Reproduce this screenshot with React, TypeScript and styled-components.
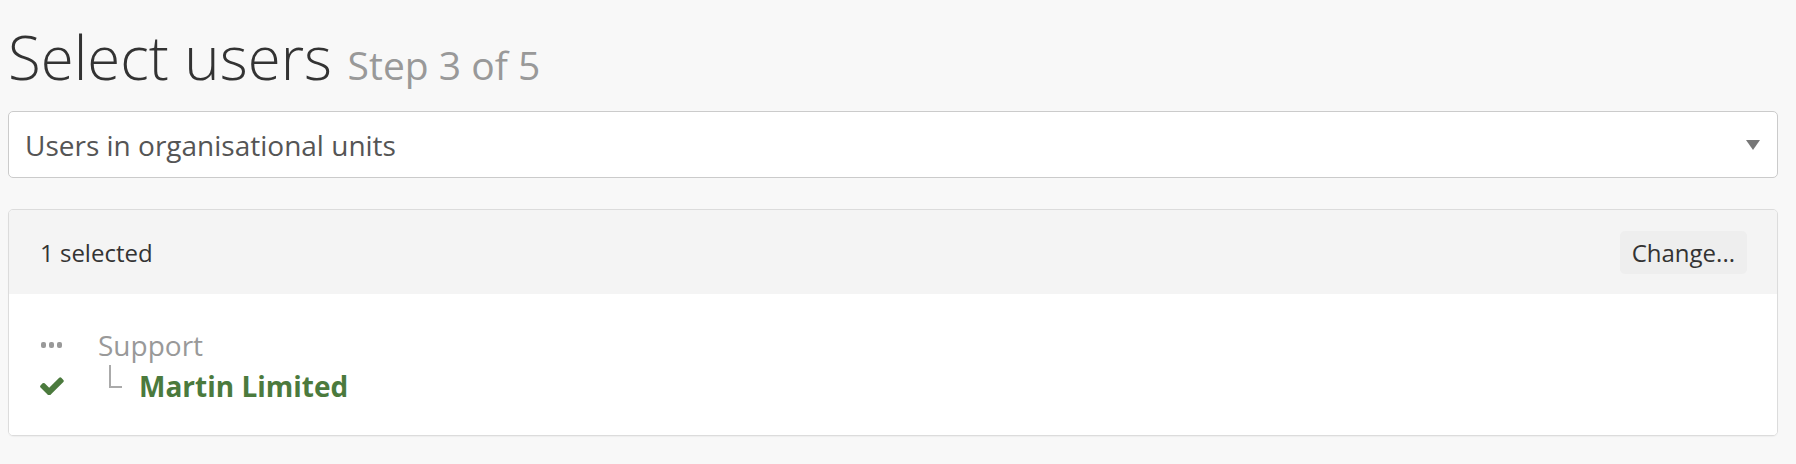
import React from 'react';
import styled, {createGlobalStyle} from "styled-components";

const GlobalStyle = createGlobalStyle`
  body {
    margin: 0;
    background: #f8f8f8;
    font-family: "Open Sans", "Liberation Sans", sans-serif;
    color: #333;
  }
`;

const Page = styled.div`
  padding: 0 18px 30px 8px;
`;

const Title = styled.h1`
  margin: 24px 0 0;
  font-size: 60px;
  font-weight: 300;
  line-height: 66px;
  color: #333;
`;

const Step = styled.small`
  font-size: 39px;
  font-weight: 400;
  color: #999;
`;

const SelectBox = styled.div`
  margin-top: 13px;
  height: 67px;
  box-sizing: border-box;
  display: flex;
  align-items: center;
  justify-content: space-between;
  padding: 0 17px 0 16px;
  background: #fff;
  border: 1px solid #cbcbcb;
  border-radius: 5px;
  font-size: 28px;
  color: #555;
`;

const Caret = styled.span`
  width: 0;
  height: 0;
  border-left: 7px solid transparent;
  border-right: 7px solid transparent;
  border-top: 10px solid #777;
`;

const Panel = styled.div`
  margin-top: 31px;
  border: 1px solid #dcdcdc;
  border-radius: 5px;
  overflow: hidden;
  box-shadow: 0 1px 1px rgba(0, 0, 0, 0.04);
`;

const PanelHeader = styled.div`
  height: 84px;
  display: flex;
  align-items: center;
  justify-content: space-between;
  padding: 0 30px 0 31px;
  background: #f4f4f4;
  font-size: 24px;
  color: #333;
`;

const ChangeBtn = styled.button`
  height: 43px;
  padding: 0 12px;
  border: none;
  border-radius: 5px;
  background: #eee;
  font-family: inherit;
  font-size: 24px;
  color: #333;
  cursor: pointer;
`;

const PanelBody = styled.div`
  background: #fff;
  padding: 30px 31px 29px;
`;

const Row = styled.div`
  display: flex;
  align-items: center;
  height: 41px;
  font-size: 28px;
`;

const IconCell = styled.div`
  width: 58px;
  flex: none;
  display: flex;
  align-items: center;
`;

const Dots = styled.div`
  display: flex;
  gap: 3px;
  margin-left: 1px;

  span {
    width: 5px;
    height: 6px;
    border-radius: 2px;
    background: #999;
  }
`;

const Name = styled.span<{ $selected?: boolean }>`
  color: ${p => p.$selected ? '#4b7a3d' : '#999'};
  font-weight: ${p => p.$selected ? 700 : 400};
`;

const Branch = styled.span`
  align-self: flex-start;
  width: 11px;
  height: 21px;
  margin: 0 17px 0 11px;
  border-left: 2px solid #aaa;
  border-bottom: 2px solid #aaa;
`;

const Check = () => (
    <svg width="24" height="18" viewBox="129 310 1542 1176">
        <path fill="#4b7a3d"
              d="M1671 566q0 40-28 68l-724 724-136 136q-28 28-68 28t-68-28l-136-136-362-362q-28-28-28-68t28-68l136-136q28-28 68-28t68 28l294 295 656-657q28-28 68-28t68 28l136 136q28 28 28 68z"/>
    </svg>
);

const App = () => {
    return (
        <Page>
            <GlobalStyle/>
            <Title>Select users <Step>Step 3 of 5</Step></Title>
            <SelectBox>
                <span>Users in organisational units</span>
                <Caret/>
            </SelectBox>
            <Panel>
                <PanelHeader>
                    <span>1 selected</span>
                    <ChangeBtn>Change...</ChangeBtn>
                </PanelHeader>
                <PanelBody>
                    <Row>
                        <IconCell>
                            <Dots><span/><span/><span/></Dots>
                        </IconCell>
                        <Name>Support</Name>
                    </Row>
                    <Row>
                        <IconCell>
                            <Check/>
                        </IconCell>
                        <Branch/>
                        <Name $selected>Martin Limited</Name>
                    </Row>
                </PanelBody>
            </Panel>
        </Page>
    );
};

export default App;
